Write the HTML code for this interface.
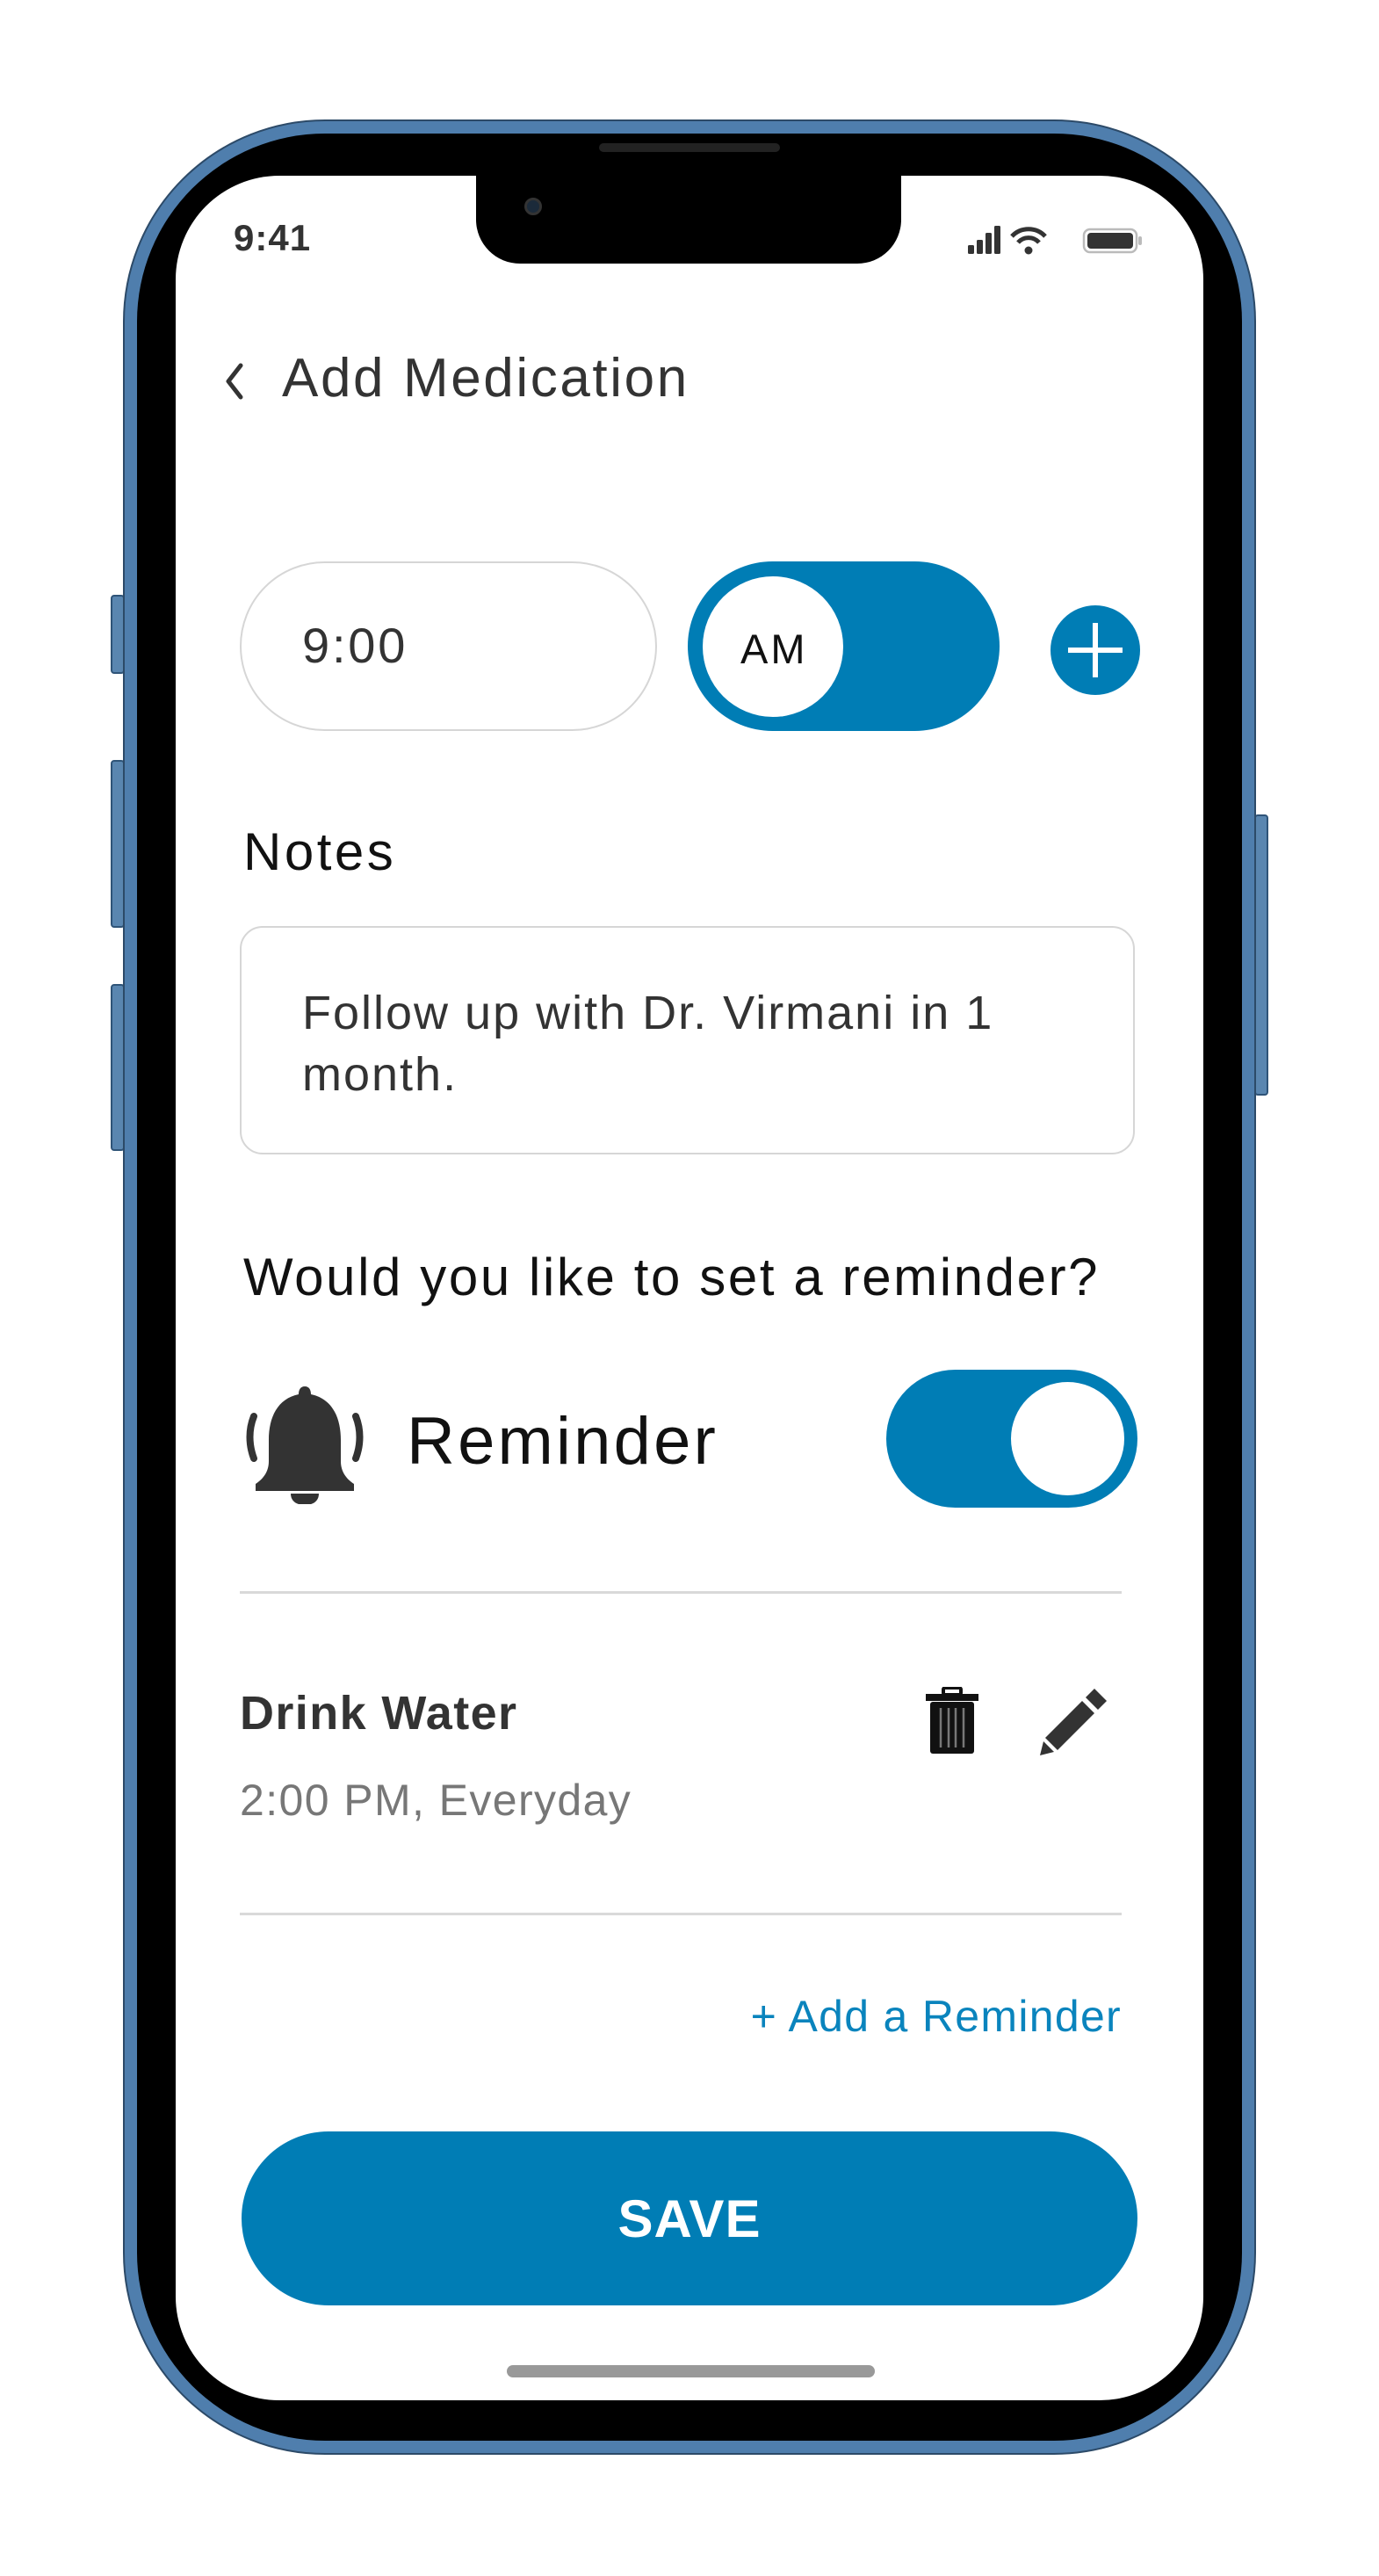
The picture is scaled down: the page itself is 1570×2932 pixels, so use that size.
<!DOCTYPE html>
<html><head><meta charset="utf-8"><style>
*{margin:0;padding:0;box-sizing:border-box}
body{width:1570px;height:2932px;background:#fff;position:relative;overflow:hidden;font-family:"Liberation Sans","DejaVu Sans",sans-serif}
.a{position:absolute}
.btn{background:#5a86b0;border:2px solid #2f5478;border-radius:4px}
.t{position:absolute;white-space:nowrap;line-height:1}
</style></head><body>
<div class="a btn" style="left:126px;top:677px;width:16px;height:90px"></div>
<div class="a btn" style="left:126px;top:865px;width:16px;height:191px"></div>
<div class="a btn" style="left:126px;top:1120px;width:16px;height:190px"></div>
<div class="a btn" style="left:1428px;top:927px;width:16px;height:320px"></div>
<div class="a" style="left:140px;top:136px;width:1290px;height:2658px;border-radius:230px;background:#4f7ead;border:2px solid #2c4a68"></div>
<div class="a" style="left:156px;top:152px;width:1258px;height:2626px;border-radius:214px;background:#000"></div>
<div class="a" style="left:200px;top:200px;width:1170px;height:2532px;border-radius:118px;background:#fff"></div>
<div class="a" style="left:542px;top:196px;width:484px;height:104px;background:#000;border-radius:0 0 50px 50px"></div>
<div class="a" style="left:682px;top:163px;width:206px;height:10px;background:#222;border-radius:5px"></div>
<div class="a" style="left:597px;top:225px;width:20px;height:20px;background:#1b2a3a;border-radius:50%;border:3px solid #333"></div>
<div class="t" style="left:266px;top:250px;font-size:42px;color:#333;font-weight:bold;letter-spacing:1px">9:41</div>
<svg class="a" style="left:1100px;top:255px" width="210" height="36" viewBox="0 0 210 36">
<rect x="2" y="24" width="7" height="10" rx="1.5" fill="#333"/><rect x="12" y="18" width="7" height="16" rx="1.5" fill="#333"/><rect x="22" y="10" width="7" height="24" rx="1.5" fill="#333"/><rect x="32" y="2" width="7" height="32" rx="1.5" fill="#333"/>
<path d="M52 14 A26 26 0 0 1 90 14" stroke="#333" stroke-width="5" fill="none"/><path d="M59 21 A16 16 0 0 1 83 21" stroke="#333" stroke-width="5" fill="none"/><circle cx="71" cy="30" r="4.5" fill="#333"/>
<rect x="134" y="6" width="60" height="26" rx="7" fill="none" stroke="#bbb" stroke-width="2.5"/><rect x="138" y="10" width="52" height="18" rx="4" fill="#333"/><rect x="196" y="14" width="4" height="10" rx="2" fill="#bbb"/>
</svg>
<svg class="a" style="left:252px;top:410px" width="30" height="48" viewBox="0 0 30 48"><path d="M22 6 L8 24 L22 42" stroke="#333" stroke-width="5" fill="none" stroke-linecap="round" stroke-linejoin="round"/></svg>
<div class="t" style="left:321px;top:400px;font-size:62px;color:#333;letter-spacing:2.6px">Add Medication</div>
<div class="a" style="left:273px;top:639px;width:475px;height:193px;border:2px solid #d6d6d6;border-radius:97px"></div>
<div class="t" style="left:344px;top:707px;font-size:56px;color:#333;letter-spacing:2.8px">9:00</div>
<div class="a" style="left:783px;top:639px;width:355px;height:193px;border-radius:97px;background:#007db5"></div>
<div class="a" style="left:800px;top:656px;width:160px;height:160px;border-radius:50%;background:#fff"></div>
<div class="t" style="left:843px;top:715px;font-size:47px;color:#111;letter-spacing:3px">AM</div>
<svg class="a" style="left:1196px;top:689px" width="102" height="102" viewBox="0 0 102 102"><circle cx="51" cy="51" r="51" fill="#007db5"/><path d="M51 20V82M20 51H82" stroke="#fff" stroke-width="6"/></svg>
<div class="t" style="left:277px;top:940px;font-size:60px;color:#111;letter-spacing:3.5px">Notes</div>
<div class="a" style="left:273px;top:1054px;width:1019px;height:260px;border:2px solid #d6d6d6;border-radius:26px"></div>
<div class="t" style="left:344px;top:1118px;font-size:54px;color:#333;line-height:70px;letter-spacing:2px">Follow up with Dr. Virmani in 1<br>month.</div>
<div class="t" style="left:277px;top:1424px;font-size:60px;color:#111;letter-spacing:2.6px">Would you like to set a reminder?</div>
<svg class="a" style="left:277px;top:1576px" width="140" height="136" viewBox="0 0 140 136">
<path d="M70 2c5 0 7 4 7 9 24 5 34 26 34 52v24c0 12 6 20 15 26v8H14v-8c9-6 15-14 15-26V63c0-26 10-47 34-52 0-5 2-9 7-9z" fill="#333"/>
<path d="M54 124h32c0 9-7 13-16 13s-16-4-16-13z" fill="#333"/>
<path d="M12 36c-6 15-6 32 0 48" stroke="#333" stroke-width="8" fill="none" stroke-linecap="round"/>
<path d="M128 36c6 15 6 32 0 48" stroke="#333" stroke-width="8" fill="none" stroke-linecap="round"/>
</svg>
<div class="t" style="left:463px;top:1603px;font-size:76px;color:#111;letter-spacing:3.2px">Reminder</div>
<div class="a" style="left:1009px;top:1559px;width:286px;height:157px;border-radius:79px;background:#007db5"></div>
<div class="a" style="left:1151px;top:1573px;width:129px;height:129px;border-radius:50%;background:#fff"></div>
<div class="a" style="left:273px;top:1811px;width:1004px;height:3px;background:#d9d9d9"></div>
<div class="t" style="left:273px;top:1923px;font-size:54px;color:#333;font-weight:bold;letter-spacing:1.4px">Drink Water</div>
<div class="t" style="left:273px;top:2024px;font-size:50px;color:#777;letter-spacing:1.4px">2:00 PM, Everyday</div>
<svg class="a" style="left:1052px;top:1920px" width="64" height="77" viewBox="0 0 64 77">
<rect x="22" y="1" width="20" height="8" rx="2" fill="none" stroke="#111" stroke-width="4"/><rect x="2" y="8" width="60" height="8" fill="#111"/><rect x="7" y="17" width="50" height="59" rx="3" fill="#111"/>
<path d="M19 24v45M28 24v45M36 24v45M45 24v45" stroke="#777" stroke-width="2.5"/></svg>
<svg class="a" style="left:1180px;top:1918px" width="84" height="80" viewBox="0 0 84 80">
<path d="M66 4l14 14-10 10-14-14z" fill="#333"/><path d="M52 18l14 14-42 42-14-14z" fill="#333"/><path d="M8 64l12 12-16 4z" fill="#333"/></svg>
<div class="a" style="left:273px;top:2177px;width:1004px;height:3px;background:#d9d9d9"></div>
<div class="t" style="right:293px;top:2270px;font-size:50px;color:#0a84bd;letter-spacing:1.3px">+ Add a Reminder</div>
<div class="a" style="left:275px;top:2426px;width:1020px;height:198px;border-radius:99px;background:#007db5"></div>
<div class="t" style="left:275px;width:1020px;text-align:center;top:2496px;font-size:60px;color:#fff;font-weight:bold;letter-spacing:1px">SAVE</div>
<div class="a" style="left:577px;top:2692px;width:419px;height:14px;border-radius:7px;background:#999"></div>
</body></html>
